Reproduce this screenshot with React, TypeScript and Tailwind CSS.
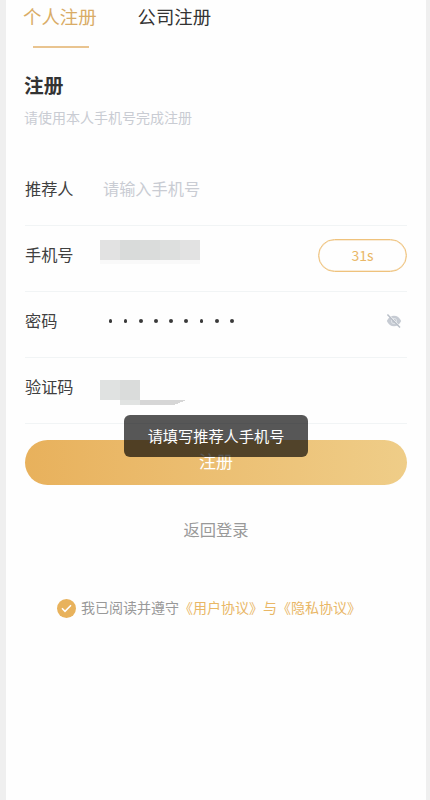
import React, { useState } from "react";

const PhoneMask = () => (
  <div className="ml-[27px] -mt-[10px]">
    <div className="flex h-5">
      <span className="w-5 bg-[#e2e2e2]" />
      <span className="w-5 bg-[#d9dbda]" />
      <span className="w-5 bg-[#dadcdb]" />
      <span className="w-5 bg-[#dddfde]" />
      <span className="w-5 bg-[#e2e2e2]" />
    </div>
    <div className="-mb-1 h-1 w-[100px] bg-[#f9f9f9]" />
  </div>
);

const CodeMask = () => (
  <svg
    className="ml-[27px] mt-3"
    width="86"
    height="25"
    viewBox="0 0 86 25"
    shapeRendering="crispEdges"
  >
    <rect width="20" height="20" fill="#e0e2e1" />
    <rect x="20" width="20" height="20" fill="#dadcdb" />
    <rect x="20" y="20" width="20" height="5" fill="#e1e3e2" />
    <path d="M40 20h45v1h-2v1h-3v1h-2v1h-3v1H40z" fill="#d6d6d6" />
  </svg>
);

const EyeOff = () => (
  <svg width="16" height="14" viewBox="0 0 16 14">
    <path
      d="M.8 7C2.4 3.500 5 1.800 8 1.800s5.600 1.700 7.200 5.200C13.600 10.500 11 12.200 8 12.200S2.400 10.500.8 7z"
      fill="#c6cbd3"
    />
    <circle cx="8" cy="7" r="2.700" fill="#c6cbd3" stroke="#dfe3e8" strokeWidth="1" />
    <path d="M2.600.2l12 13" stroke="#fff" strokeWidth="1" />
    <path d="M1.400.5l12.600 13" stroke="#b9bfc8" strokeWidth="1.500" />
  </svg>
);

const Row = ({
  label,
  children,
}: {
  label: string;
  children: React.ReactNode;
}) => (
  <div className="flex h-[66px] items-center border-b border-[#f1f4f5] pb-2">
    <span className="w-12 shrink-0 whitespace-nowrap text-[16.2px] text-[#404040]">
      {label}
    </span>
    {children}
  </div>
);

const App = () => {
  const [referrer, setReferrer] = useState("");
  const [agreed, setAgreed] = useState(true);

  return (
    <div className="h-[800px] w-[430px] overflow-hidden bg-[#efefef] pr-1 pl-1.5 font-['Noto_Sans_CJK_SC',sans-serif]">
      <div className="relative h-full bg-[#fefefe] pr-[19px] pl-[19px]">
        <div className="-ml-0.5 flex h-12 gap-[41px] text-[18.4px] leading-8">
          <button className="flex flex-col items-center text-[#d9ac66]">
            <span>个人注册</span>
            <span className="mt-[14px] ml-0.5 h-[1.5px] w-14 bg-[#e9c490]" />
          </button>
          <button className="flex text-[#333]">公司注册</button>
        </div>

        <h1 className="mt-[22px] -ml-px text-[19.700px] leading-[30px] font-bold text-[#333]">
          注册
        </h1>
        <p className="mt-[7px] -ml-px text-[14px] leading-5 text-[#c9ccd3]">
          请使用本人手机号完成注册
        </p>

        <div className="mt-[33px]">
          <Row label="推荐人">
            <input
              value={referrer}
              onChange={(e) => setReferrer(e.target.value)}
              placeholder="请输入手机号"
              className="ml-[30px] w-48 text-[16.2px] outline-none placeholder:text-[#c9ccd3]"
            />
          </Row>
          <Row label="手机号">
            <PhoneMask />
            <button className="mt-[2px] ml-auto h-[33px] w-[89px] rounded-full border-[1.5px] border-[#efc27c] pb-px text-[14px] leading-5 text-[#e9b766] ring-[0.5px] ring-[#efc27c]/60 ring-inset">
              31s
            </button>
          </Row>
          <Row label="密码">
            <div className="mt-px ml-[35.500px] flex gap-[11.400px]">
              {Array.from({ length: 9 }).map((_, i) => (
                <span
                  key={i}
                  className="size-[3.800px] rounded-full bg-[#3a3a3a]"
                />
              ))}
            </div>
            <span className="mr-[5px] ml-auto">
              <EyeOff />
            </span>
          </Row>
          <Row label="验证码">
            <CodeMask />
          </Row>
        </div>

        <button className="mt-4 block h-[45px] w-[382px] rounded-full bg-linear-to-r from-[#e8b15c] to-[#efcd88] pb-[3px] text-[17px] text-white">
          注册
        </button>
        <button className="mx-auto mt-8 block text-[16.300px] leading-6 text-[#999]">
          返回登录
        </button>

        <div className="mt-[58px] ml-8 flex items-center text-[14px] leading-5 whitespace-nowrap text-[#999]">
          <button
            onClick={() => setAgreed(!agreed)}
            className="mr-[5px] flex size-[19px] items-center justify-center rounded-full bg-[#e8b25c]"
          >
            {agreed && (
              <svg width="11" height="9" viewBox="0 0 11 9" fill="none">
                <path d="M1 4.300l3 3L10 1.300" stroke="#fff" strokeWidth="1.600" />
              </svg>
            )}
          </button>
          <span className="-mt-[3px]">
            我已阅读并遵守
            <span className="text-[#e9b766]">《用户协议》与《隐私协议》</span>
          </span>
        </div>

        {/* toast */}
        <div className="absolute top-[415px] left-[118px] flex h-[42px] w-[184px] items-center justify-center rounded-md bg-black/66 pb-0.5 text-[15.200px] text-white">
          请填写推荐人手机号
        </div>
      </div>
    </div>
  );
};

export default App;
